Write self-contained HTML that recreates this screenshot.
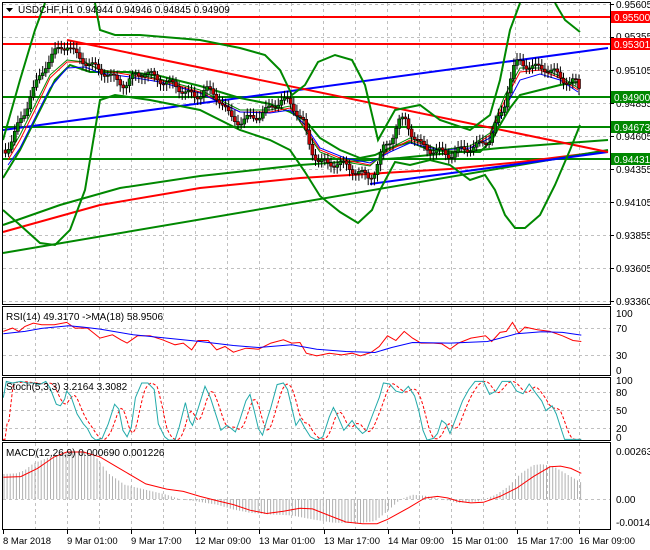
<!DOCTYPE html><html><head><style>
body{margin:0;background:#fff;width:650px;height:550px;overflow:hidden}
svg{display:block;font-family:"Liberation Sans",sans-serif;font-size:10px}
</style></head><body>
<svg id="s" width="650" height="550" viewBox="0 0 650 550" xmlns="http://www.w3.org/2000/svg">
<rect width="650" height="550" fill="#fff"/>
<g id="grid" stroke="#c0c0c0" stroke-dasharray="3,3" stroke-width="1"></g>
<g id="lines" fill="none"></g>
<g id="candles"></g>
<g stroke="#000" fill="none" stroke-width="1">
<rect x="2.5" y="2.5" width="608" height="302"/>
<rect x="2.5" y="306.5" width="608" height="69"/>
<rect x="2.5" y="377.5" width="608" height="63"/>
<rect x="2.5" y="442.5" width="608" height="87"/>
</g>
<g id="labels" fill="#000"></g>
<path d="M6 8 L13 8 L9.5 12 Z" fill="#000"/>
<text x="18" y="13">USDCHF,H1  0.94944 0.94946 0.94845 0.94909</text>
<text x="6" y="320">RSI(14) 49.3170  -&gt;MA(18) 58.9506</text>
<text x="6" y="390">Stoch(5,3,3) 3.2164 3.3082</text>
<text x="6" y="456">MACD(12,26,9) 0.000690 0.001226</text>
</svg>
<script>
const NS="http://www.w3.org/2000/svg",s=document.getElementById('s');
function el(p,t,a,txt){const e=document.createElementNS(NS,t);for(const k in a)e.setAttribute(k,a[k]);if(txt!==undefined)e.textContent=txt;document.getElementById(p).appendChild(e);return e}
for(let x=35;x<608;x+=32){for(const[a,b] of [[3,305],[307,376],[378,441],[443,530]])el('grid','line',{x1:x+.5,y1:a,x2:x+.5,y2:b})}
const py=[4,37,70,103,136,169,202,235,268,301];
py.forEach(y=>el('grid','line',{x1:3,y1:y+.5,x2:610,y2:y+.5}));
[328,355].forEach(y=>el('grid','line',{x1:3,y1:y+.5,x2:610,y2:y+.5}));
[392,410,428].forEach(y=>el('grid','line',{x1:3,y1:y+.5,x2:610,y2:y+.5}));
el('grid','line',{x1:3,y1:499.5,x2:610,y2:499.5});
function pl(pts,c,w,da){el('lines','polyline',{points:pts,stroke:c,'stroke-width':w||1,'stroke-dasharray':da||'none',fill:'none'})}
function interp(a,x){for(let i=0;i<a.length-1;i++)if(x>=a[i][0]&&x<=a[i+1][0]){const t=(x-a[i][0])/(a[i+1][0]-a[i][0]);return a[i][1]+t*(a[i+1][1]-a[i][1])}return a[a.length-1][1]}
const K=0.4167;
function conv(arr,y0,z0,sc){return arr.map(p=>[p[0]*K,y0+(p[1]-z0)*sc])}
function str(a){return a.map(p=>p[0].toFixed(1)+','+p[1].toFixed(1)).join(' ')}
// MACD histogram
const H=conv([[8,522],[40,520],[60,510],[80,490],[120,470],[160,455],[200,452],[230,470],[260,520],[300,555],[350,570],[400,585],[430,598],[470,605],[520,615],[560,630],[600,640],[650,645],[700,648],[750,660],[800,670],[860,672],[900,665],[930,635],[960,600],[990,585],[1020,588],[1060,598],[1100,610],[1150,605],[1190,585],[1220,560],[1250,520],[1280,495],[1300,492],[1330,500],[1370,530],[1395,548]],499,598,0.329);
for(let x=4;x<=581;x+=3.1){let v=interp(H,x);el('lines','line',{x1:x,y1:499,x2:x,y2:v,stroke:'#b0b0b0','stroke-width':1})}
// levels
el('lines','line',{x1:3,y1:17,x2:610,y2:17,stroke:'#f00','stroke-width':2});
el('lines','line',{x1:3,y1:44,x2:610,y2:44,stroke:'#f00','stroke-width':2});
el('lines','line',{x1:3,y1:97,x2:610,y2:97,stroke:'#080','stroke-width':2});
el('lines','line',{x1:3,y1:127,x2:610,y2:127,stroke:'#080','stroke-width':2});
el('lines','line',{x1:3,y1:159,x2:610,y2:159,stroke:'#080','stroke-width':2});
pl("3,232 100,205 200,188 300,178 400,172 450,169 520,162 608,151","#f00",2);
pl("3,225 60,205 120,188 200,176 300,165 400,158 500,148 608,140","#080",2);
pl("3,253 608,150","#080",2);
pl("3,130 608,48","#00f",2);
pl("370,184 608,152","#00f",2);
pl("67,40 608,152","#f00",2);
pl("3,140 20,80 35,30 45,3","#080",2);pl("95,3 100,30 115,35 140,35 200,40 240,48 265,55 280,70 292,95 305,85 318,62 335,55 352,60 365,85 378,140 395,110 420,105 440,120 470,130 490,115 500,80 510,30 520,3","#080",2);
pl("555,3 565,20 580,32","#080",2);
pl("3,210 20,225 40,243 55,245 70,230 85,190 100,100 115,95 150,100 200,110 240,130 270,140 290,150 305,172 320,196 340,212 358,223 372,210 380,190 395,162 410,165 430,160 450,165 470,180 485,175 495,190 505,215 515,228 525,228 540,215 555,185 570,150 580,125","#080",2);
pl("3,178 20,150 40,110 55,80 70,65 90,72 110,72 130,72 160,76 200,86 240,98 270,104 290,112 305,120 320,138 340,150 360,158 375,155 390,148 410,142 430,150 460,152 480,152 492,140 500,125 510,108 520,95 540,90 560,85 578,82","#080",2);
const P=[[5,150],[12,140],[18,125],[25,110],[30,95],[37,82],[45,65],[52,55],[60,48],[67,45],[75,55],[85,62],[95,68],[105,73],[115,80],[125,85],[135,75],[145,72],[155,78],[165,82],[175,86],[185,92],[195,98],[205,88],[212,95],[220,100],[230,118],[240,122],[250,118],[260,115],[270,108],[280,100],[288,102],[295,110],[302,120],[310,150],[318,160],[328,165],[338,162],[348,168],[358,172],[368,178],[375,170],[382,150],[390,140],[398,122],[405,120],[412,135],[420,145],[430,150],[440,152],[450,155],[460,150],[470,148],[480,145],[488,140],[495,125],[503,110],[508,85],[513,68],[518,62],[525,65],[535,68],[545,68],[553,72],[560,78],[568,82],[575,82],[580,92]];
let prev=P[0][1];
for(let x=5;x<=580;x+=3.1){let c=interp(P,x)+(Math.sin(x*1.7)*4);let o=prev;const up=c<o;const top=Math.min(o,c)-3-Math.abs(Math.sin(x))*4,bot=Math.max(o,c)+3+Math.abs(Math.cos(x))*4;
el('candles','line',{x1:x+.5,y1:top,x2:x+.5,y2:bot,stroke:'#000'});
el('candles','rect',{x:x-1,y:Math.min(o,c),width:3,height:Math.max(1,Math.abs(o-c)),fill:up?'#080':'#c00',stroke:'#000','stroke-width':.6});prev=c}
pl("8,160 20,140 35,110 50,78 67,62 85,62 100,70 130,75 160,80 200,92 240,112 270,112 290,108 305,128 320,150 345,160 370,165 390,150 410,140 440,150 470,148 490,135 505,100 520,72 540,70 560,78 578,90","#f00",1);
pl("8,165 20,148 35,118 50,88 67,68 85,67 100,73 130,77 160,82 200,93 240,112 270,113 290,110 305,125 320,148 345,158 370,163 390,152 410,143 440,150 470,148 490,138 505,108 520,80 540,74 560,80 578,92","#00f",1);
pl("8,155 20,135 35,105 50,75 67,60 85,62 100,70 130,73 160,79 200,90 240,110 270,110 290,106 305,130 320,152 345,162 370,166 390,148 410,138 440,150 470,146 490,133 505,95 520,68 540,68 560,76 578,88","#080",1);
// RSI
const R=conv([[8,95],[30,85],[45,95],[60,80],[80,70],[100,75],[130,75],[160,68],[180,85],[210,85],[240,115],[270,105],[290,120],[305,130],[330,108],[360,108],[390,120],[420,135],[440,130],[460,150],[475,122],[500,122],[520,150],[540,140],[560,157],[590,145],[620,148],[650,130],[680,120],[700,130],[720,128],[735,160],[760,168],[790,160],[820,165],[845,160],[865,168],[890,158],[910,140],[930,108],[950,122],[970,95],[990,115],[1010,130],[1040,130],[1060,132],[1080,148],[1100,130],[1130,115],[1165,108],[1180,125],[1200,98],[1215,95],[1230,68],[1245,100],[1260,82],[1290,90],[1320,95],[1350,108],[1375,122],[1395,125]],313,40,0.335);
const RB=conv([[8,102],[60,95],[100,86],[165,78],[200,82],[240,88],[320,105],[400,115],[480,125],[560,137],[620,143],[700,135],[760,148],[830,155],[900,158],[940,143],[990,128],[1080,130],[1170,125],[1240,102],[1300,96],[1350,98],[1395,106]],313,40,0.335);
pl(str(R),"#f00",1);pl(str(RB),"#00f",1);
// Stoch
const S=conv([[8,290],[15,240],[30,245],[50,240],[65,245],[80,245],[95,250],[110,240],[120,260],[135,310],[145,315],[155,295],[160,270],[170,285],[185,340],[200,370],[210,385],[220,410],[230,420],[245,415],[260,370],[275,310],[285,325],[295,390],[305,410],[315,380],[325,290],[340,245],[355,245],[370,265],[380,370],[395,410],[405,420],[420,420],[430,380],[445,305],[455,360],[462,375],[475,325],[492,255],[505,290],[520,350],[530,390],[545,375],[555,385],[565,395],[575,360],[590,300],[600,280],[610,330],[620,385],[630,405],[640,360],[650,320],[665,250],[680,245],[690,265],[700,320],[710,375],[720,355],[730,380],[745,410],[760,420],[775,410],[790,350],[800,320],[810,345],[825,390],[835,375],[845,360],[855,380],[870,400],[880,390],[895,340],[910,290],[920,245],[935,248],[950,270],[965,275],[980,255],[995,285],[1005,330],[1015,390],[1025,420],[1040,415],[1050,400],[1060,360],[1070,370],[1080,400],[1095,350],[1110,300],[1125,265],[1140,240],[1160,240],[1175,280],[1190,270],[1205,240],[1225,240],[1240,270],[1255,278],[1270,248],[1285,275],[1300,300],[1310,330],[1325,315],[1335,340],[1345,380],[1355,418],[1370,418],[1395,418]],383,245,0.326);
const SD=[];for(let x=3;x<=581;x+=2){let a=interp(S,x-3),b=interp(S,x-6),c=interp(S,x-9);SD.push([x,(a+b+c)/3])}
pl(str(SD),"#f00",1,"3,2");pl(str(S),"#2aa",1);
// MACD signal
const M=conv([[8,532],[50,530],[90,505],[130,470],[160,455],[200,455],[240,470],[280,500],[320,530],[350,552],[400,568],[440,575],[480,590],[520,603],[560,615],[600,632],[640,642],[680,635],[720,626],[750,628],[790,648],[830,668],[870,673],[905,673],[930,660],[980,625],[1020,595],[1050,590],[1075,595],[1100,605],[1130,610],[1160,608],[1200,590],[1240,565],[1280,530],[1320,500],[1345,498],[1370,505],[1395,520]],499,598,0.329);
pl(str(M),"#f00",1);
// labels
const pl2=["0.95605","0.95355","0.95105","0.94855","0.94605","0.94355","0.94105","0.93855","0.93605","0.93360"];
py.forEach((y,i)=>{if(i!=1&&i!=3)el('labels','text',{x:616,y:y+4},pl2[i]);el('labels','line',{x1:610,y1:y+.5,x2:614,y2:y+.5,stroke:'#000'})});
function box(y,t,c){el('labels','rect',{x:611,y:y-6,width:39,height:12,fill:c});el('labels','text',{x:614,y:y+4,fill:'#fff'},t)}
el('labels','text',{x:616,y:40},"0.95355");el('labels','text',{x:616,y:107},"0.94855");
box(17,"0.95500","#f00");box(44,"0.95301","#f00");box(97,"0.94900","#080");box(127,"0.94673","#080");box(159,"0.94431","#080");
[[317,"100"],[332,"70"],[359,"30"],[374,"0"],[384,"100"],[396,"80"],[414,"50"],[432,"20"],[441,"0"],[455,"0.002634"],[503,"0.00"],[526,"-0.00142"]].forEach(a=>el('labels','text',{x:616,y:a[0]},a[1]));
const dl=[[3,"8 Mar 2018"],[67,"9 Mar 01:00"],[131,"9 Mar 17:00"],[195,"12 Mar 09:00"],[259,"13 Mar 01:00"],[324,"13 Mar 17:00"],[388,"14 Mar 09:00"],[452,"15 Mar 01:00"],[517,"15 Mar 17:00"],[579,"16 Mar 09:00"]];
dl.forEach(a=>{el('labels','text',{x:a[0],y:544,'font-size':'9.5'},a[1]);el('labels','line',{x1:a[0]+.5,y1:530,x2:a[0]+.5,y2:534,stroke:'#000'})});
</script>
</body></html>
